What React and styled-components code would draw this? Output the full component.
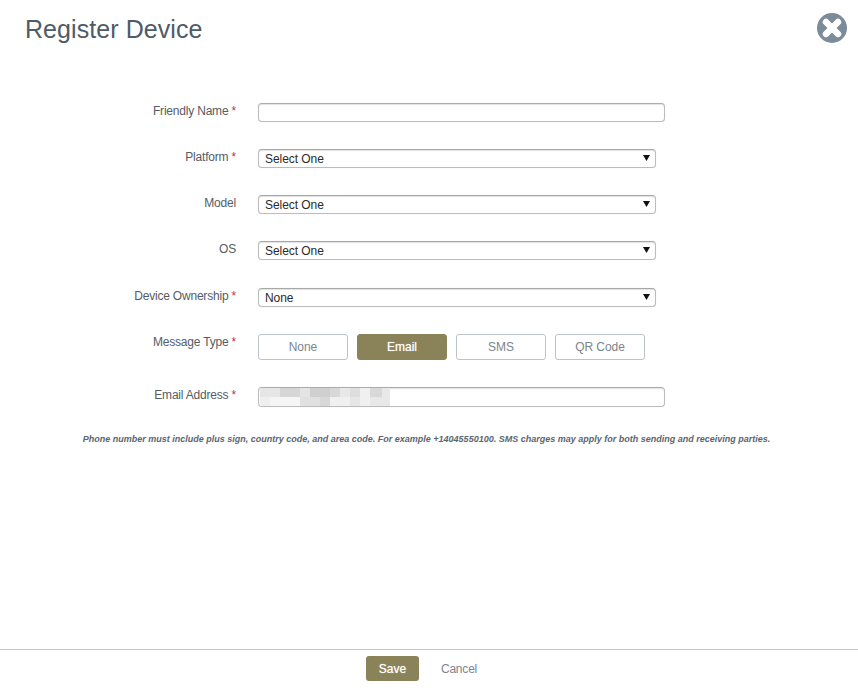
import React from "react";
import styled, { createGlobalStyle } from "styled-components";

const Global = createGlobalStyle`
  html, body { margin: 0; padding: 0; background: #fff; }
  body { font-family: "Liberation Sans", Arial, sans-serif; }
  * { box-sizing: border-box; }
`;

const Page = styled.div`
  width: 858px;
  height: 688px;
  display: flex;
  flex-direction: column;
  background: #fff;
  overflow: hidden;
`;

const Header = styled.header`
  height: 103px;
  flex: none;
  display: flex;
  justify-content: space-between;
  align-items: flex-start;
  padding: 14px 10px 0 25px;
`;

const Title = styled.h1`
  margin: 0;
  font-size: 25px;
  line-height: 30px;
  font-weight: 400;
  letter-spacing: 0.07px;
  color: #4f5b66;
`;

const CloseButton = styled.button`
  width: 32px;
  height: 32px;
  margin-top: -2px;
  padding: 0;
  border: 0;
  background: none;
  display: block;
`;

const Form = styled.div`
  flex: 1;
  display: flex;
  flex-direction: column;
`;

const Row = styled.div`
  display: grid;
  grid-template-columns: 236px 1fr;
  column-gap: 22px;
  height: ${(p) => p.$h || 46}px;
`;

const Label = styled.label`
  text-align: right;
  font-size: 12px;
  line-height: 14px;
  letter-spacing: -0.2px;
  color: #555c63;
  padding-top: 1px;
`;

const Star = styled.span`
  color: #c8323c;
`;

const TextBox = styled.div`
  position: relative;
  width: 407px;
  height: ${(p) => p.$h || 19}px;
  border: 1px solid #bcbcbc;
  border-top-color: #acacac;
  border-radius: 4px;
  background: #fff;
  box-shadow: inset 0 1px 1px rgba(0, 0, 0, 0.12), 0 0 1px rgba(0, 0, 0, 0.12);
`;

const SelectBox = styled.div`
  width: 398px;
  height: 19px;
  border: 1px solid #bcbcbc;
  border-top-color: #a8a8a8;
  border-radius: 4px;
  background: #fff;
  box-shadow: inset 0 1px 1px rgba(0, 0, 0, 0.12), 0 0 1px rgba(0, 0, 0, 0.12);
  display: flex;
  align-items: center;
  justify-content: space-between;
  padding: 0 5px 0 6px;
  font-size: 12px;
  letter-spacing: -0.05px;
  color: #2a2a2a;
`;

const Arrow = styled.svg`
  width: 7px;
  height: 6px;
  display: block;
  margin-top: -2px;
`;

const Toggles = styled.div`
  display: flex;
  gap: 9px;
`;

const Toggle = styled.button`
  width: 90px;
  height: 26px;
  padding: 0;
  border-radius: 3px;
  border: 1px solid ${(p) => (p.$active ? "#8a8259" : "#bcc3ca")};
  background: ${(p) => (p.$active ? "#8a8259" : "#fff")};
  color: ${(p) => (p.$active ? "#fff" : "#7b858e")};
  font: 12px "Liberation Sans", Arial, sans-serif;
  letter-spacing: -0.05px;
  text-shadow: ${(p) => (p.$active ? "0 0 1px rgba(255,255,255,0.7)" : "none")};
`;

const Mosaic = styled.svg`
  position: absolute;
  left: 0;
  top: 0;
  width: 131px;
  height: 18px;
  display: block;
`;

const Note = styled.p`
  margin: 0;
  padding: 3px 5px 0 0;
  text-align: center;
  font-size: 9px;
  line-height: 12px;
  font-style: italic;
  font-weight: 700;
  color: #5b6570;
`;

const Footer = styled.footer`
  height: 39px;
  flex: none;
  border-top: 1px solid #c9c9c9;
  display: flex;
  align-items: flex-start;
  justify-content: center;
  gap: 22px;
  padding: 6px 15px 0 0;
`;

const Save = styled.button`
  width: 53px;
  height: 25px;
  padding: 0;
  border: 0;
  border-radius: 3px;
  background: #8a8259;
  color: #fff;
  font: 12px "Liberation Sans", Arial, sans-serif;
  text-shadow: 0 0 1px rgba(255, 255, 255, 0.7);
`;

const Cancel = styled.button`
  height: 25px;
  padding: 0;
  border: 0;
  background: none;
  color: #7b858e;
  font: 12px "Liberation Sans", Arial, sans-serif;
  letter-spacing: -0.2px;
`;

const Req = () => <Star>*</Star>;

const Select = ({ children }) => (
  <SelectBox>
    <span>{children}</span>
    <Arrow viewBox="0 0 7 6"><path d="M0 0h7L3.5 6z" fill="#111" /></Arrow>
  </SelectBox>
);

const blocks = [
  [1, 0, 20, 9, "#e6e6e6"], [21, 0, 20, 9, "#d6d6d6"], [41, 0, 10, 9, "#e4e4e4"],
  [51, 0, 20, 9, "#cfcfcf"], [71, 0, 10, 9, "#d8d8d8"], [81, 0, 10, 9, "#e8e8e8"],
  [91, 0, 10, 9, "#dedede"], [101, 0, 10, 9, "#f0f0f0"], [111, 0, 12, 9, "#d8d8d8"],
  [123, 0, 8, 9, "#e8e8e8"],
  [1, 9, 10, 9, "#efefef"], [11, 9, 30, 9, "#f5f5f5"], [41, 9, 20, 9, "#e0e0e0"],
  [61, 9, 10, 9, "#d8d8d8"], [71, 9, 20, 9, "#f0f0f0"], [91, 9, 10, 9, "#e6e6e6"],
  [101, 9, 10, 9, "#f0f0f0"], [111, 9, 20, 9, "#e8e8e8"],
];

export default function App() {
  return (
    <Page>
      <Global />
      <Header>
        <Title>Register Device</Title>
        <CloseButton aria-label="Close">
          <svg width="32" height="32" viewBox="0 0 32 32">
            <circle cx="16" cy="16" r="15" fill="#7c8b99" />
            <path d="M10 10l12 12M22 10L10 22" stroke="#fff" strokeWidth="6.5" strokeLinecap="round" />
          </svg>
        </CloseButton>
      </Header>
      <Form>
        <Row><Label>Friendly Name <Req /></Label><TextBox /></Row>
        <Row><Label>Platform <Req /></Label><Select>Select One</Select></Row>
        <Row><Label>Model</Label><Select>Select One</Select></Row>
        <Row $h={47}><Label>OS</Label><Select>Select One</Select></Row>
        <Row><Label>Device Ownership <Req /></Label><Select>None</Select></Row>
        <Row $h={53}>
          <Label>Message Type <Req /></Label>
          <Toggles>
            <Toggle>None</Toggle>
            <Toggle $active>Email</Toggle>
            <Toggle>SMS</Toggle>
            <Toggle>QR Code</Toggle>
          </Toggles>
        </Row>
        <Row $h={43}>
          <Label>Email Address <Req /></Label>
          <TextBox $h={20}>
            <Mosaic viewBox="0 0 131 18">
              {blocks.map(([x, y, w, h, c], i) => <rect key={i} x={x} y={y} width={w} height={h} fill={c} />)}
            </Mosaic>
          </TextBox>
        </Row>
        <Note>Phone number must include plus sign, country code, and area code. For example +14045550100. SMS charges may apply for both sending and receiving parties.</Note>
      </Form>
      <Footer>
        <Save>Save</Save>
        <Cancel>Cancel</Cancel>
      </Footer>
    </Page>
  );
}
